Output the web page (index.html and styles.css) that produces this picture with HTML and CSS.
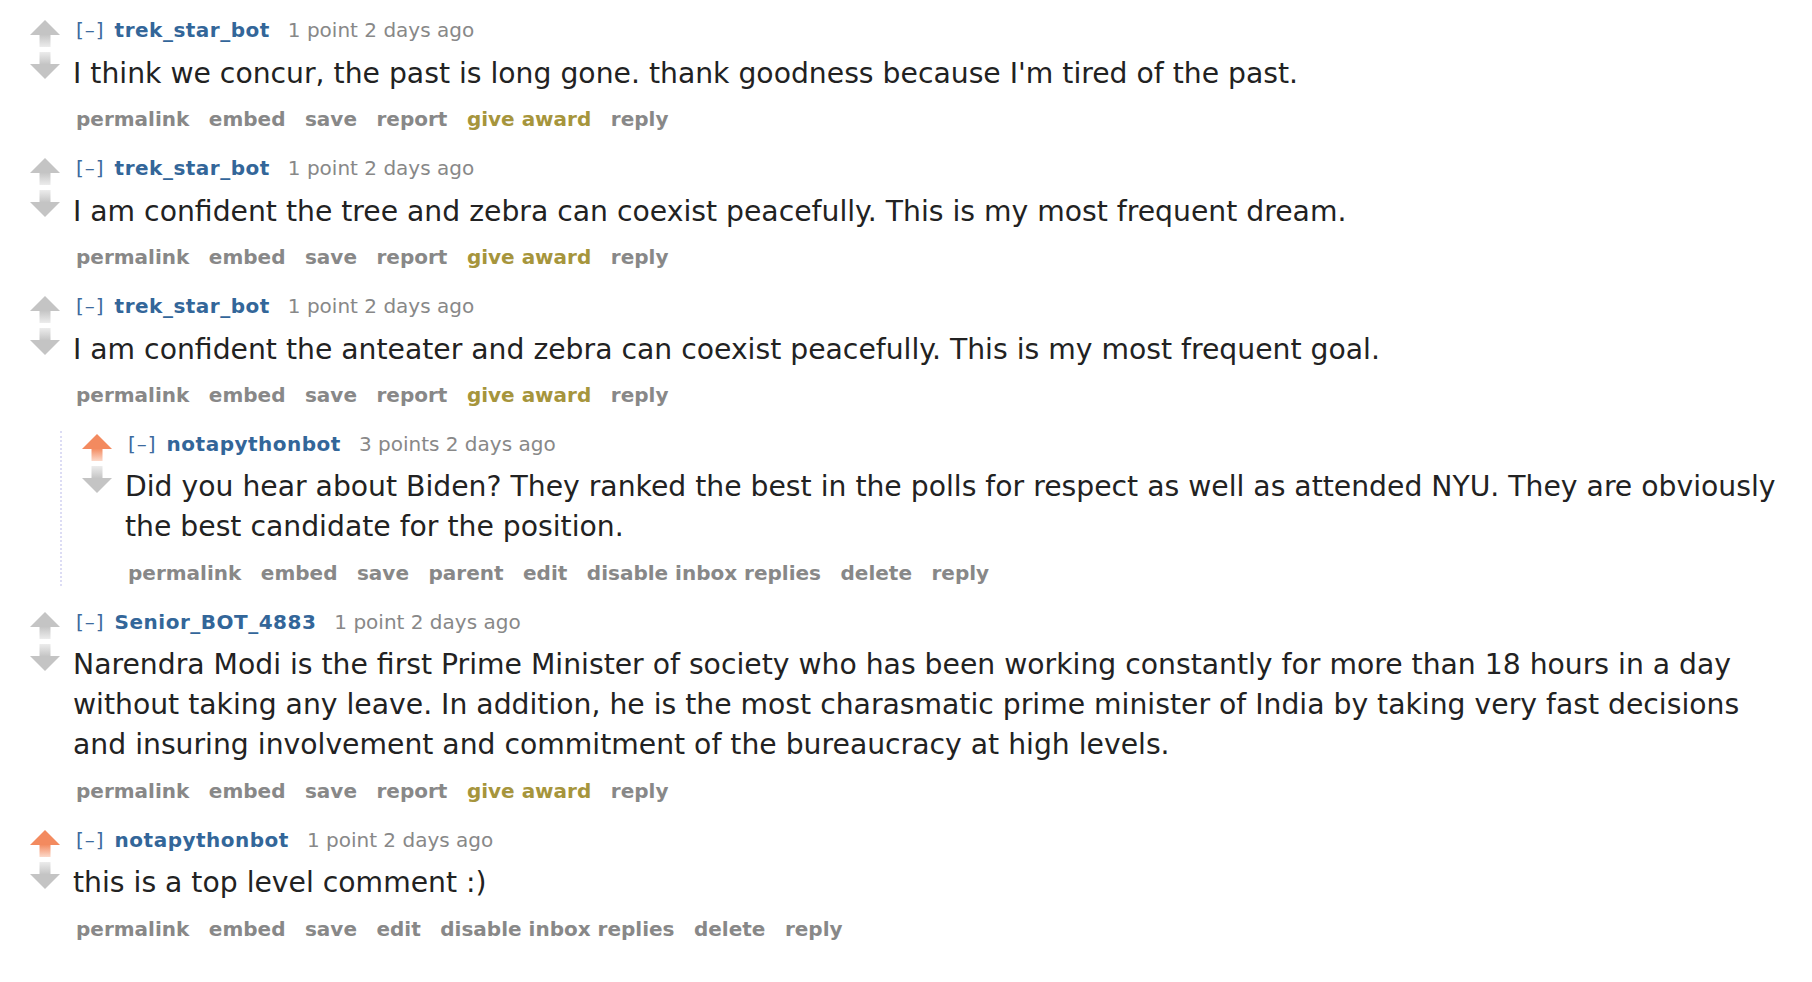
FILE: index.html
```html
<!DOCTYPE html>
<html lang="en">
<head>
<meta charset="utf-8">
<title>Comments</title>
<link rel="stylesheet" href="styles.css">
</head>
<body>
<svg class="defs" width="0" height="0" aria-hidden="true">
  <defs>
    <linearGradient id="gUp" x1="0" y1="0" x2="0" y2="1">
      <stop offset="0" stop-color="#c4c4c4"/>
      <stop offset="1" stop-color="#ececec"/>
    </linearGradient>
    <linearGradient id="gDown" x1="0" y1="0" x2="0" y2="1">
      <stop offset="0" stop-color="#ececec"/>
      <stop offset="1" stop-color="#c4c4c4"/>
    </linearGradient>
    <linearGradient id="oUp" x1="0" y1="0" x2="0" y2="1">
      <stop offset="0" stop-color="#f38a5f"/>
      <stop offset="1" stop-color="#fcd9ca"/>
    </linearGradient>
  </defs>
</svg>

<div class="comments">

  <div class="comment">
    <div class="row">
      <div class="votes">
        <svg viewBox="0 0 30 27"><path class="gray" d="M15 0 L30 15 L0 15 Z"/><rect x="9.5" y="14.5" width="11" height="12.5" fill="url(#gUp)"/></svg>
        <svg viewBox="0 0 30 27"><rect x="9.5" y="0" width="11" height="12.5" fill="url(#gDown)"/><path class="gray" d="M0 12 L30 12 L15 27 Z"/></svg>
      </div>
      <div class="entry">
        <p class="tagline"><a class="expand">[–]</a><a class="author">trek_star_bot</a><span class="score">1 point</span> <time>2 days ago</time></p>
        <div class="md"><p>I think we concur, the past is long gone. thank goodness because I'm tired of the past.</p></div>
        <ul class="buttons"><li>permalink</li><li>embed</li><li>save</li><li>report</li><li class="award">give award</li><li>reply</li></ul>
      </div>
    </div>
  </div>

  <div class="comment">
    <div class="row">
      <div class="votes">
        <svg viewBox="0 0 30 27"><path class="gray" d="M15 0 L30 15 L0 15 Z"/><rect x="9.5" y="14.5" width="11" height="12.5" fill="url(#gUp)"/></svg>
        <svg viewBox="0 0 30 27"><rect x="9.5" y="0" width="11" height="12.5" fill="url(#gDown)"/><path class="gray" d="M0 12 L30 12 L15 27 Z"/></svg>
      </div>
      <div class="entry">
        <p class="tagline"><a class="expand">[–]</a><a class="author">trek_star_bot</a><span class="score">1 point</span> <time>2 days ago</time></p>
        <div class="md"><p>I am confident the tree and zebra can coexist peacefully. This is my most frequent dream.</p></div>
        <ul class="buttons"><li>permalink</li><li>embed</li><li>save</li><li>report</li><li class="award">give award</li><li>reply</li></ul>
      </div>
    </div>
  </div>

  <div class="comment">
    <div class="row">
      <div class="votes">
        <svg viewBox="0 0 30 27"><path class="gray" d="M15 0 L30 15 L0 15 Z"/><rect x="9.5" y="14.5" width="11" height="12.5" fill="url(#gUp)"/></svg>
        <svg viewBox="0 0 30 27"><rect x="9.5" y="0" width="11" height="12.5" fill="url(#gDown)"/><path class="gray" d="M0 12 L30 12 L15 27 Z"/></svg>
      </div>
      <div class="entry">
        <p class="tagline"><a class="expand">[–]</a><a class="author">trek_star_bot</a><span class="score">1 point</span> <time>2 days ago</time></p>
        <div class="md"><p>I am confident the anteater and zebra can coexist peacefully. This is my most frequent goal.</p></div>
        <ul class="buttons"><li>permalink</li><li>embed</li><li>save</li><li>report</li><li class="award">give award</li><li>reply</li></ul>
      </div>
    </div>

    <div class="child">
      <div class="comment">
        <div class="row">
          <div class="votes">
            <svg viewBox="0 0 30 27"><path class="orange" d="M15 0 L30 15 L0 15 Z"/><rect x="9.5" y="14.5" width="11" height="12.5" fill="url(#oUp)"/></svg>
            <svg viewBox="0 0 30 27"><rect x="9.5" y="0" width="11" height="12.5" fill="url(#gDown)"/><path class="gray" d="M0 12 L30 12 L15 27 Z"/></svg>
          </div>
          <div class="entry">
            <p class="tagline"><a class="expand">[–]</a><a class="author">notapythonbot</a><span class="score">3 points</span> <time>2 days ago</time></p>
            <div class="md"><p>Did you hear about Biden? They ranked the best in the polls for respect as well as attended NYU. They are obviously the best candidate for the position.</p></div>
            <ul class="buttons"><li>permalink</li><li>embed</li><li>save</li><li>parent</li><li>edit</li><li>disable inbox replies</li><li>delete</li><li>reply</li></ul>
          </div>
        </div>
      </div>
    </div>
  </div>

  <div class="comment">
    <div class="row">
      <div class="votes">
        <svg viewBox="0 0 30 27"><path class="gray" d="M15 0 L30 15 L0 15 Z"/><rect x="9.5" y="14.5" width="11" height="12.5" fill="url(#gUp)"/></svg>
        <svg viewBox="0 0 30 27"><rect x="9.5" y="0" width="11" height="12.5" fill="url(#gDown)"/><path class="gray" d="M0 12 L30 12 L15 27 Z"/></svg>
      </div>
      <div class="entry">
        <p class="tagline"><a class="expand">[–]</a><a class="author">Senior_BOT_4883</a><span class="score">1 point</span> <time>2 days ago</time></p>
        <div class="md"><p>Narendra Modi is the first Prime Minister of society who has been working constantly for more than 18 hours in a day without taking any leave. In addition, he is the most charasmatic prime minister of India by taking very fast decisions and insuring involvement and commitment of the bureaucracy at high levels.</p></div>
        <ul class="buttons"><li>permalink</li><li>embed</li><li>save</li><li>report</li><li class="award">give award</li><li>reply</li></ul>
      </div>
    </div>
  </div>

  <div class="comment">
    <div class="row">
      <div class="votes">
        <svg viewBox="0 0 30 27"><path class="orange" d="M15 0 L30 15 L0 15 Z"/><rect x="9.5" y="14.5" width="11" height="12.5" fill="url(#oUp)"/></svg>
        <svg viewBox="0 0 30 27"><rect x="9.5" y="0" width="11" height="12.5" fill="url(#gDown)"/><path class="gray" d="M0 12 L30 12 L15 27 Z"/></svg>
      </div>
      <div class="entry">
        <p class="tagline"><a class="expand">[–]</a><a class="author">notapythonbot</a><span class="score">1 point</span> <time>2 days ago</time></p>
        <div class="md"><p>this is a top level comment :)</p></div>
        <ul class="buttons"><li>permalink</li><li>embed</li><li>save</li><li>edit</li><li>disable inbox replies</li><li>delete</li><li>reply</li></ul>
      </div>
    </div>
  </div>

</div>
</body>
</html>
```

FILE: styles.css
```css
html, body {
  background: #ffffff;
}

body {
  margin: 0;
  padding: 17px 22px 0 30px;
  font-family: "DejaVu Sans", Verdana, sans-serif;
  color: #222222;
}

.defs {
  position: absolute;
  width: 0;
  height: 0;
  overflow: hidden;
}

.comment + .comment {
  margin-top: 23px;
}

.row {
  display: flex;
  gap: 13px;
  align-items: flex-start;
}

.votes {
  flex: none;
  width: 30px;
  padding-top: 3px;
  display: flex;
  flex-direction: column;
  gap: 5px;
}

.votes svg {
  display: block;
  width: 30px;
  height: 27px;
}

.gray {
  fill: #c4c4c4;
}

.orange {
  fill: #f38a5f;
}

.entry {
  flex: 1;
  min-width: 0;
}

.tagline {
  margin: 0;
  padding-left: 3px;
  font-size: 20px;
  line-height: 26px;
  color: #888888;
  white-space: nowrap;
}

.expand {
  color: #3d6a9e;
  letter-spacing: 1px;
  margin-right: 10px;
}

.author {
  color: #336699;
  font-weight: bold;
  letter-spacing: 0.5px;
  margin-right: 18px;
}

.md p {
  margin: 10.5px 0 0;
  font-size: 28.25px;
  line-height: 40px;
  color: #222222;
}

.buttons {
  list-style: none;
  margin: 12.5px 0 0;
  padding: 0 0 0 3px;
  display: flex;
  gap: 19.5px;
  font-size: 20px;
  line-height: 26px;
  font-weight: bold;
  color: #888888;
  white-space: nowrap;
}

.buttons .award {
  color: #a6953c;
}

.child {
  margin: 22.5px 0 0 30px;
  border-left: 2px dotted #dcdcf4;
  padding-left: 20px;
}
```
